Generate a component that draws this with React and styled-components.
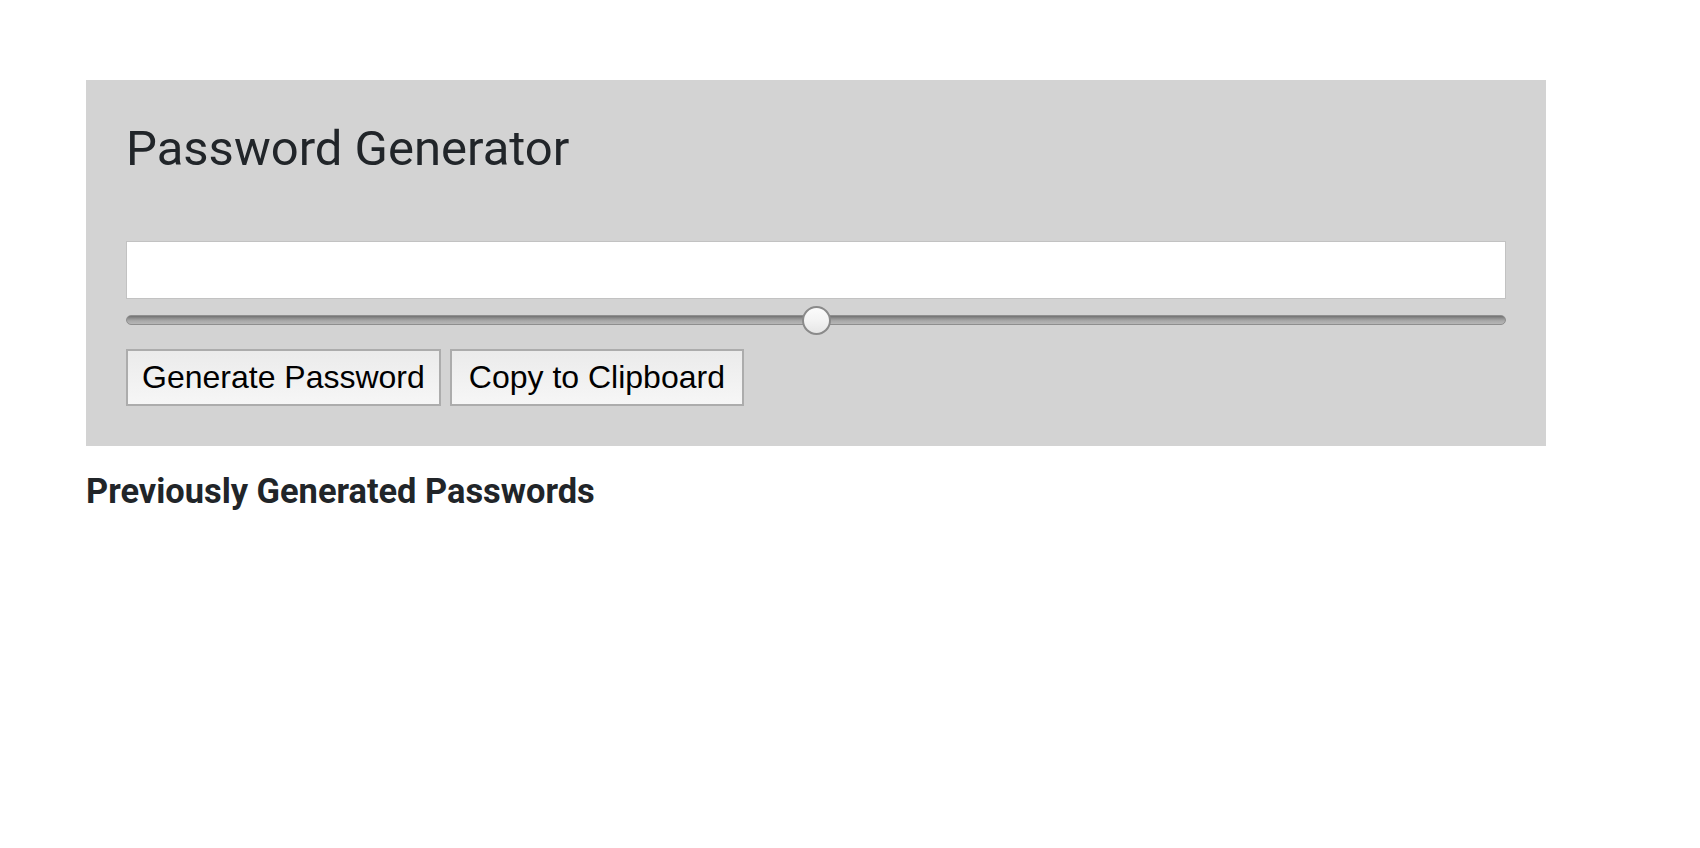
import React, { useState } from "react";
import styled, { createGlobalStyle } from "styled-components";

const GlobalStyle = createGlobalStyle`
  html, body {
    margin: 0;
    padding: 0;
    background: #ffffff;
    font-family: Roboto, "Liberation Sans", Arial, sans-serif;
    color: #212529;
  }
`;

const Page = styled.div`
  padding: 80px 154px 0 86px;
`;

const Panel = styled.section`
  background: #d3d3d3;
  padding: 40px 40px 40px 40px;
`;

const Title = styled.h1`
  margin: 0 0 62px;
  font-family: Roboto, sans-serif;
  font-weight: 400;
  font-size: 49px;
  line-height: 1.2;
  color: #212529;
`;

const PasswordField = styled.input`
  display: block;
  box-sizing: border-box;
  width: 100%;
  height: 58px;
  margin: 0;
  padding: 0 12px;
  background: #ffffff;
  border: 1px solid #c2c2c2;
  border-radius: 0;
  font-family: "Liberation Sans", Arial, sans-serif;
  font-size: 28px;
  outline: none;
`;

const Slider = styled.input`
  -webkit-appearance: none;
  appearance: none;
  display: block;
  width: 100%;
  height: 29px;
  margin: 7px 0 0;
  padding: 0;
  background: transparent;

  &::-webkit-slider-runnable-track {
    height: 10px;
    box-sizing: border-box;
    border-radius: 5px;
    border: 1px solid #8e8e8e;
    background: linear-gradient(#727272 0%, #8f8f8f 30%, #a9a9a9 60%, #b6b6b6 100%);
  }

  &::-webkit-slider-thumb {
    -webkit-appearance: none;
    appearance: none;
    box-sizing: border-box;
    width: 29px;
    height: 29px;
    margin-top: -10.5px;
    border-radius: 50%;
    border: 2px solid #8a8a8a;
    background: linear-gradient(#fbfbfb 0%, #f3f3f3 50%, #e6e6e6 100%);
  }

  &:focus {
    outline: none;
  }
`;

const ButtonRow = styled.div`
  display: flex;
  gap: 9px;
  margin-top: 14px;
`;

const Button = styled.button`
  box-sizing: border-box;
  height: 57px;
  padding: 0 ${(p) => p.$padX || 15}px;
  margin: 0;
  border: 2px solid #acacac;
  border-radius: 0;
  background: linear-gradient(#ebebeb, #f6f6f6);
  color: #000000;
  font-family: "Liberation Sans", Arial, sans-serif;
  font-size: 32px;
  line-height: 1;
  cursor: pointer;
`;

const HistoryHeading = styled.h3`
  margin: 25px 0 0;
  font-family: Roboto, sans-serif;
  font-weight: 700;
  font-size: 34.4px;
  line-height: 1.2;
  color: #212529;
`;

const HistoryList = styled.ul`
  margin: 0;
  padding: 0;
  list-style: none;
`;

export default function App() {
  const [length, setLength] = useState(50);
  const [password, setPassword] = useState("");
  const [history, setHistory] = useState([]);

  const generate = () => {
    const chars =
      "ABCDEFGHIJKLMNOPQRSTUVWXYZabcdefghijklmnopqrstuvwxyz0123456789!@#$%^&*";
    let out = "";
    const n = Math.max(4, Math.round(length / 2));
    for (let i = 0; i < n; i++) out += chars[Math.floor(Math.random() * chars.length)];
    setPassword(out);
    setHistory((h) => [out, ...h]);
  };

  const copy = () => {
    if (navigator.clipboard && password) navigator.clipboard.writeText(password).catch(() => {});
  };

  return (
    <>
      <GlobalStyle />
      <Page>
        <Panel>
          <Title>Password Generator</Title>
          <PasswordField
            type="text"
            value={password}
            onChange={(e) => setPassword(e.target.value)}
          />
          <Slider
            type="range"
            min="0"
            max="100"
            value={length}
            onChange={(e) => setLength(Number(e.target.value))}
          />
          <ButtonRow>
            <Button onClick={generate} $padX={14}>Generate Password</Button>
            <Button onClick={copy} $padX={17}>Copy to Clipboard</Button>
          </ButtonRow>
        </Panel>
        <HistoryHeading>Previously Generated Passwords</HistoryHeading>
        <HistoryList>
          {history.map((p, i) => (
            <li key={i}>{p}</li>
          ))}
        </HistoryList>
      </Page>
    </>
  );
}
